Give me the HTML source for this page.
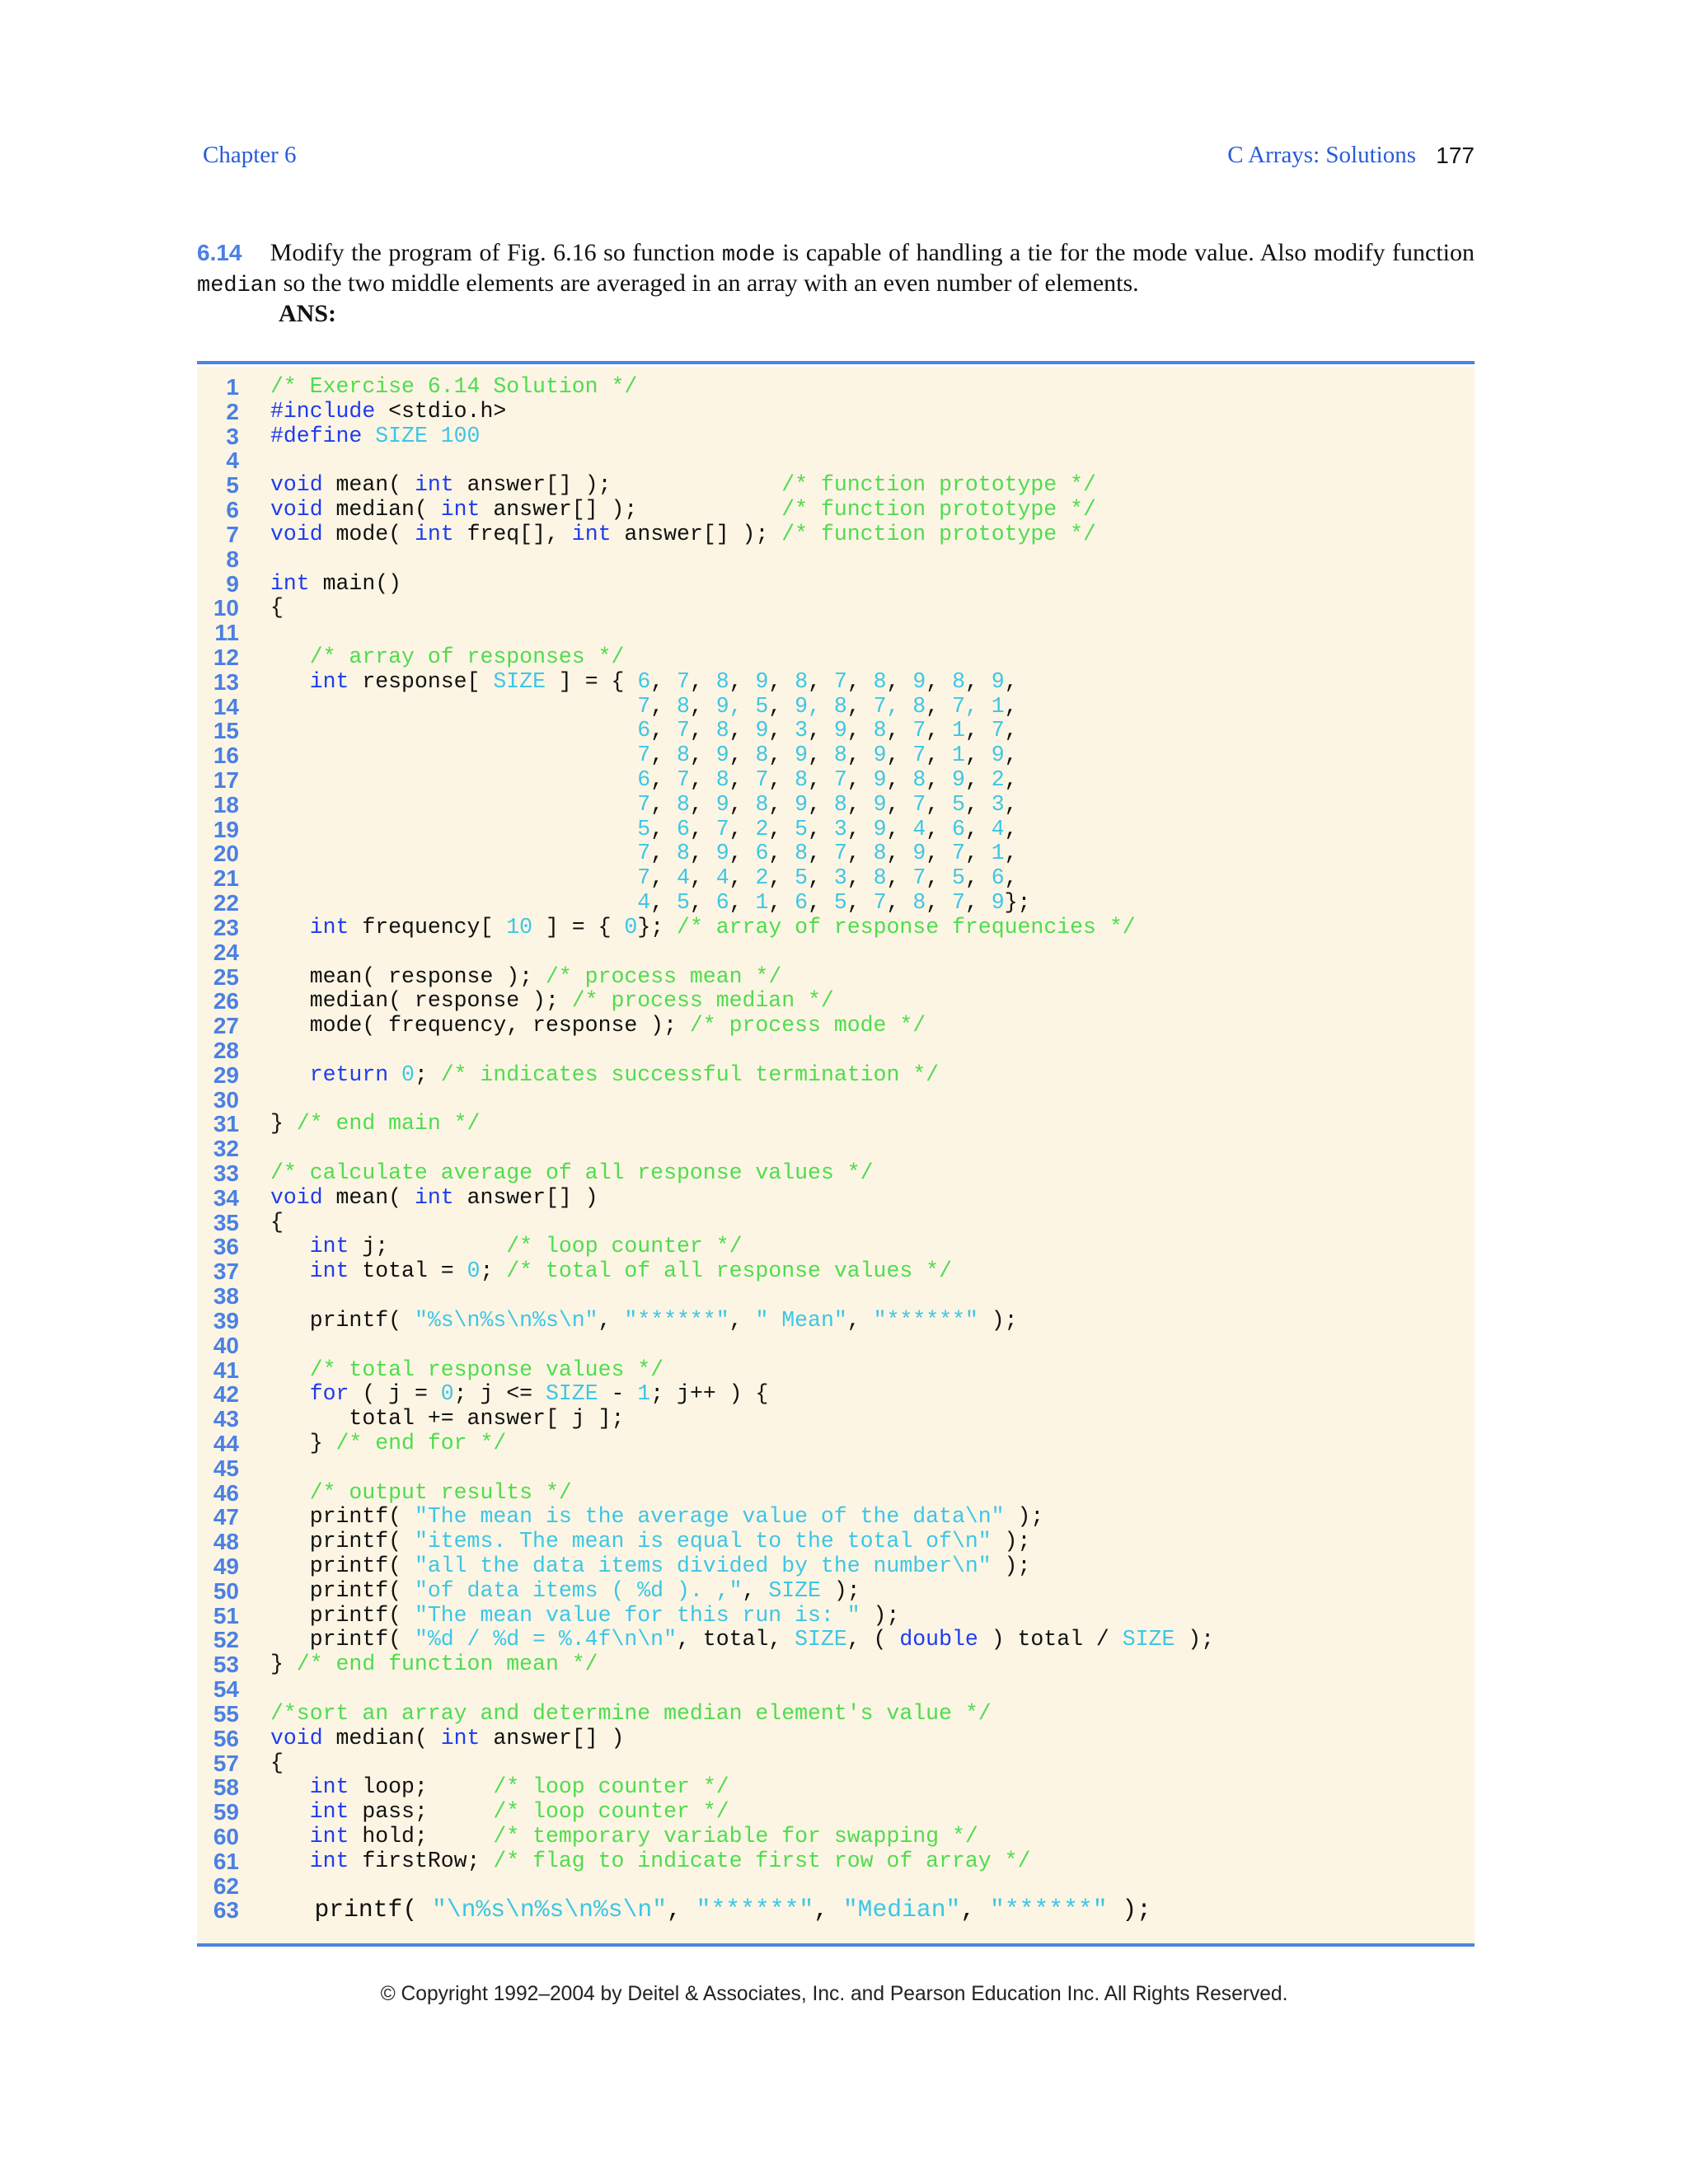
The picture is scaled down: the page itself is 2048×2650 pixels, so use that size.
<!DOCTYPE html>
<html><head><meta charset="utf-8">
<style>
html,body{margin:0;padding:0;background:#fff;}
body{width:2048px;height:2650px;position:relative;overflow:hidden;font-family:"Liberation Serif",serif;}
.hdr{position:absolute;top:172px;font-size:29px;color:#2a5bd7;}
.p{position:absolute;left:239px;font-size:30px;color:#111;white-space:nowrap;}
.mono{font-family:"Liberation Mono",monospace;font-size:27px;}
.rule{position:absolute;left:239px;width:1550px;height:4px;background:#4a84e0;}
.box{position:absolute;left:239px;top:445px;width:1550px;height:1913px;background:#fdf5e3;}
pre{position:absolute;margin:0;top:455px;font-family:"Liberation Mono",monospace;font-size:26.5px;line-height:29.82px;color:#111;}
.ln{left:240px;width:50px;text-align:right;font-family:"Liberation Sans",sans-serif;font-weight:bold;color:#4a80e4;font-size:28px;}
.code{left:328px;}
.k{color:#1d3cf0}.c{color:#4fdc4f}.s{color:#3cc6e6}
.big{font-size:29.7px;}
.copy{position:absolute;top:2406px;left:0;width:2024px;text-align:center;font-family:"Liberation Sans",sans-serif;font-size:24.6px;color:#222;}
</style></head><body>
<div class="hdr" style="left:246px">Chapter 6</div>
<div class="hdr" style="right:330px">C Arrays: Solutions</div>
<div class="hdr" style="right:259px;color:#111;font-family:'Liberation Sans',sans-serif;font-size:28px;top:173px">177</div>
<div class="p" style="top:290px;width:1550px;white-space:normal;text-align:justify;text-align-last:justify"><span style="color:#4a80e4;font-family:'Liberation Sans',sans-serif;font-weight:bold;font-size:28px">6.14</span>&nbsp;&nbsp;&nbsp;&nbsp;Modify the program of Fig. 6.16 so function <span class="mono">mode</span> is capable of handling a tie for the mode value. Also modify function</div>
<div class="p" style="top:327px"><span class="mono">median</span> so the two middle elements are averaged in an array with an even number of elements.</div>
<div class="p" style="top:364px;left:338px;font-weight:bold">ANS:</div>
<div class="box"></div>
<div class="rule" style="top:438px"></div>
<div class="rule" style="top:2358px"></div>
<pre class="ln">1
2
3
4
5
6
7
8
9
10
11
12
13
14
15
16
17
18
19
20
21
22
23
24
25
26
27
28
29
30
31
32
33
34
35
36
37
38
39
40
41
42
43
44
45
46
47
48
49
50
51
52
53
54
55
56
57
58
59
60
61
62
63</pre>
<pre class="code"><span class="c">/* Exercise 6.14 Solution */</span>
<span class="k">#include</span> &lt;stdio.h&gt;
<span class="k">#define</span> <span class="s">SIZE 100</span>

<span class="k">void</span> mean( <span class="k">int</span> answer[] );             <span class="c">/* function prototype */</span>
<span class="k">void</span> median( <span class="k">int</span> answer[] );           <span class="c">/* function prototype */</span>
<span class="k">void</span> mode( <span class="k">int</span> freq[], <span class="k">int</span> answer[] ); <span class="c">/* function prototype */</span>

<span class="k">int</span> main()
{

   <span class="c">/* array of responses */</span>
   <span class="k">int</span> response[ <span class="s">SIZE</span> ] = { <span class="s">6</span>, <span class="s">7</span>, <span class="s">8</span>, <span class="s">9</span>, <span class="s">8</span>, <span class="s">7</span>, <span class="s">8</span>, <span class="s">9</span>, <span class="s">8</span>, <span class="s">9</span>,
                            <span class="s">7</span>, <span class="s">8</span>, <span class="s">9, 5</span>, <span class="s">9, 8</span>, <span class="s">7, 8</span>, <span class="s">7, 1</span>,
                            <span class="s">6</span>, <span class="s">7</span>, <span class="s">8</span>, <span class="s">9</span>, <span class="s">3</span>, <span class="s">9</span>, <span class="s">8</span>, <span class="s">7</span>, <span class="s">1</span>, <span class="s">7</span>,
                            <span class="s">7</span>, <span class="s">8</span>, <span class="s">9</span>, <span class="s">8</span>, <span class="s">9</span>, <span class="s">8</span>, <span class="s">9</span>, <span class="s">7</span>, <span class="s">1</span>, <span class="s">9</span>,
                            <span class="s">6</span>, <span class="s">7</span>, <span class="s">8</span>, <span class="s">7</span>, <span class="s">8</span>, <span class="s">7</span>, <span class="s">9</span>, <span class="s">8</span>, <span class="s">9</span>, <span class="s">2</span>,
                            <span class="s">7</span>, <span class="s">8</span>, <span class="s">9</span>, <span class="s">8</span>, <span class="s">9</span>, <span class="s">8</span>, <span class="s">9</span>, <span class="s">7</span>, <span class="s">5</span>, <span class="s">3</span>,
                            <span class="s">5</span>, <span class="s">6</span>, <span class="s">7</span>, <span class="s">2</span>, <span class="s">5</span>, <span class="s">3</span>, <span class="s">9</span>, <span class="s">4</span>, <span class="s">6</span>, <span class="s">4</span>,
                            <span class="s">7</span>, <span class="s">8</span>, <span class="s">9</span>, <span class="s">6</span>, <span class="s">8</span>, <span class="s">7</span>, <span class="s">8</span>, <span class="s">9</span>, <span class="s">7</span>, <span class="s">1</span>,
                            <span class="s">7</span>, <span class="s">4</span>, <span class="s">4</span>, <span class="s">2</span>, <span class="s">5</span>, <span class="s">3</span>, <span class="s">8</span>, <span class="s">7</span>, <span class="s">5</span>, <span class="s">6</span>,
                            <span class="s">4</span>, <span class="s">5</span>, <span class="s">6</span>, <span class="s">1</span>, <span class="s">6</span>, <span class="s">5</span>, <span class="s">7</span>, <span class="s">8</span>, <span class="s">7</span>, <span class="s">9</span>};
   <span class="k">int</span> frequency[ <span class="s">10</span> ] = { <span class="s">0</span>}; <span class="c">/* array of response frequencies */</span>

   mean( response ); <span class="c">/* process mean */</span>
   median( response ); <span class="c">/* process median */</span>
   mode( frequency, response ); <span class="c">/* process mode */</span>

   <span class="k">return</span> <span class="s">0</span>; <span class="c">/* indicates successful termination */</span>

} <span class="c">/* end main */</span>

<span class="c">/* calculate average of all response values */</span>
<span class="k">void</span> mean( <span class="k">int</span> answer[] )
{
   <span class="k">int</span> j;         <span class="c">/* loop counter */</span>
   <span class="k">int</span> total = <span class="s">0</span>; <span class="c">/* total of all response values */</span>

   printf( <span class="s">"%s\n%s\n%s\n"</span>, <span class="s">"******"</span>, <span class="s">" Mean"</span>, <span class="s">"******"</span> );

   <span class="c">/* total response values */</span>
   <span class="k">for</span> ( j = <span class="s">0</span>; j &lt;= <span class="s">SIZE</span> - <span class="s">1</span>; j++ ) {
      total += answer[ j ];
   } <span class="c">/* end for */</span>

   <span class="c">/* output results */</span>
   printf( <span class="s">"The mean is the average value of the data\n"</span> );
   printf( <span class="s">"items. The mean is equal to the total of\n"</span> );
   printf( <span class="s">"all the data items divided by the number\n"</span> );
   printf( <span class="s">"of data items ( %d ). ,"</span>, <span class="s">SIZE</span> );
   printf( <span class="s">"The mean value for this run is: "</span> );
   printf( <span class="s">"%d / %d = %.4f\n\n"</span>, total, <span class="s">SIZE</span>, ( <span class="k">double</span> ) total / <span class="s">SIZE</span> );
} <span class="c">/* end function mean */</span>

<span class="c">/*sort an array and determine median element's value */</span>
<span class="k">void</span> median( <span class="k">int</span> answer[] )
{
   <span class="k">int</span> loop;     <span class="c">/* loop counter */</span>
   <span class="k">int</span> pass;     <span class="c">/* loop counter */</span>
   <span class="k">int</span> hold;     <span class="c">/* temporary variable for swapping */</span>
   <span class="k">int</span> firstRow; <span class="c">/* flag to indicate first row of array */</span>

<span class="big">   printf( <span class="s">"\n%s\n%s\n%s\n"</span>, <span class="s">"******"</span>, <span class="s">"Median"</span>, <span class="s">"******"</span> );</span></pre>
<div class="copy">© Copyright 1992–2004 by Deitel &amp; Associates, Inc. and Pearson Education Inc. All Rights Reserved.</div>
</body></html>
